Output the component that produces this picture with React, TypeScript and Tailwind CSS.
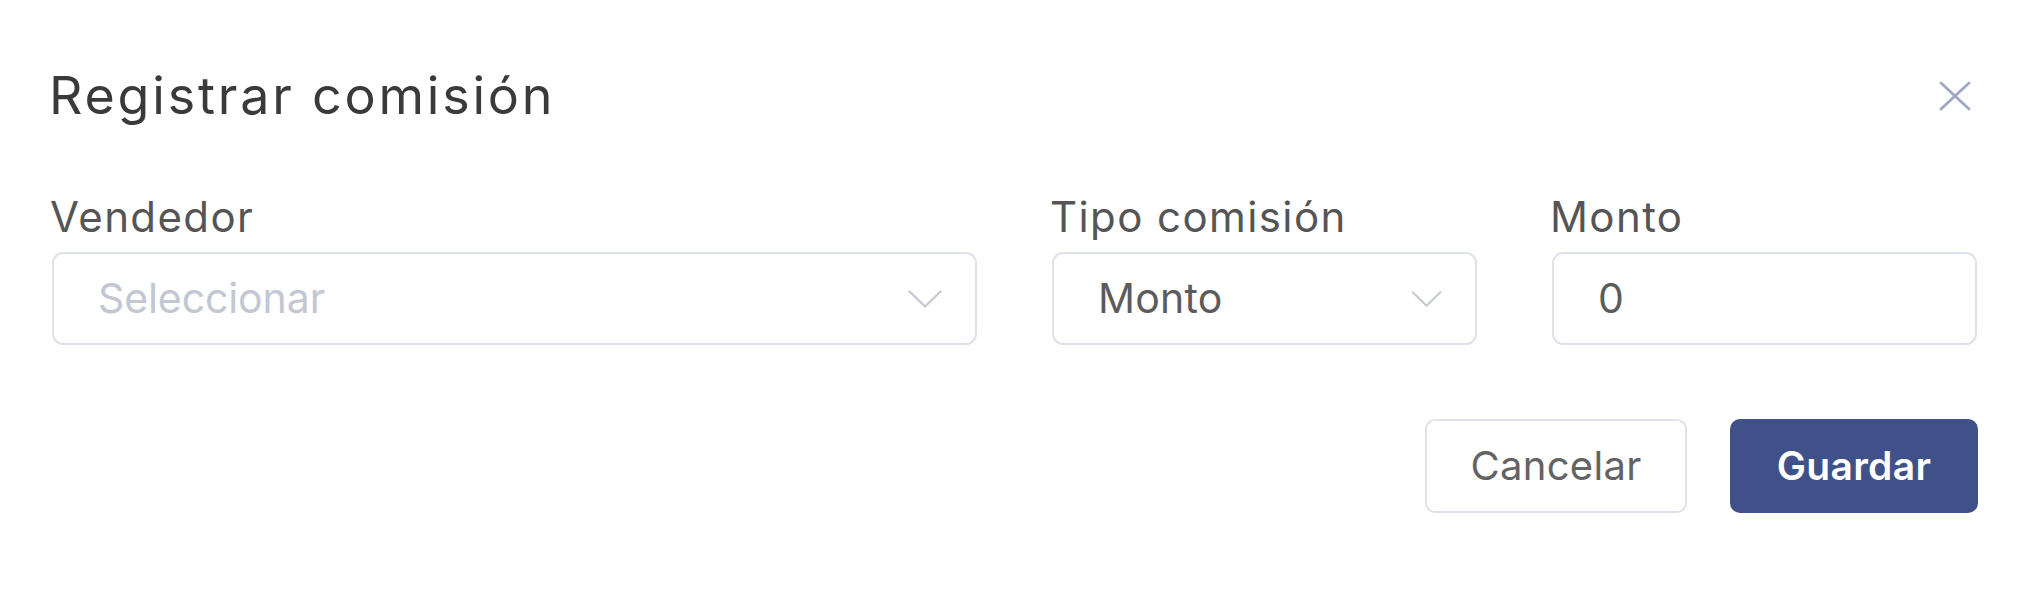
import React from 'react';

const Chevron = ({ className = '' }: { className?: string }) => (
  <svg viewBox="0 0 34 18" className={className} fill="none" stroke="currentColor" strokeWidth={2.4} strokeLinecap="round" strokeLinejoin="round">
    <polyline points="1.5,1.5 17,16.5 32.5,1.5" />
  </svg>
);

const Field = ({ label, children, className = '' }: { label: string; children: React.ReactNode; className?: string }) => (
  <div className={`flex flex-col ${className}`}>
    <label className="-ml-[2px] text-[42px] leading-[50px] tracking-[1.4px] text-[#555555] mb-[10px]">{label}</label>
    {children}
  </div>
);

export default function App() {
  return (
    <div className="w-[2034px] h-[592px] bg-white font-['Inter',sans-serif] pl-[52px] pr-[57px] pt-[64px]">
      {/* header */}
      <div className="flex items-center justify-between h-[64px]">
        <h2 className="-ml-[3px] text-[52px] leading-[64px] tracking-[2.8px] font-normal text-[#3a3a3a]">Registrar comisión</h2>
        <button className="w-[32px] h-[30px] mr-[6px] text-[#9ea8c2]" title="Cerrar">
          <svg viewBox="0 0 32 30" className="w-full h-full" fill="none" stroke="currentColor" strokeWidth={2.8} strokeLinecap="round">
            <line x1="2" y1="2" x2="30" y2="28" />
            <line x1="30" y1="2" x2="2" y2="28" />
          </svg>
        </button>
      </div>

      {/* fields */}
      <div className="grid grid-cols-4 gap-x-[75px] mt-[64px]">
        <Field label="Vendedor" className="col-span-2">
          <div className="h-[93px] border-2 border-[#dfe2ea] rounded-[11px] flex items-center justify-between pl-[44px] pr-[33px]">
            <span className="text-[41px] tracking-[-0.1px] text-[#c3c7d1]">Seleccionar</span>
            <Chevron className="w-[34px] h-[18px] text-[#c5c9d4]" />
          </div>
        </Field>
        <Field label="Tipo comisión">
          <div className="h-[93px] border-2 border-[#dfe2ea] rounded-[11px] flex items-center justify-between pl-[44px] pr-[33px]">
            <span className="text-[41px] tracking-[0.2px] text-[#5c5c5c]">Monto</span>
            <Chevron className="w-[31px] h-[16px] text-[#c5c9d4]" />
          </div>
        </Field>
        <Field label="Monto">
          <div className="h-[93px] border-2 border-[#dfe2ea] rounded-[11px] flex items-center pl-[44px]">
            <span className="text-[41px] text-[#5c5c5c]">0</span>
          </div>
        </Field>
      </div>

      {/* actions */}
      <div className="flex justify-end gap-[43px] mt-[74px] -mr-[1px]">
        <button className="w-[262px] h-[94px] border-2 border-[#dfe2ea] rounded-[10px] bg-white text-[40px] tracking-[0.3px] text-[#636363]">
          Cancelar
        </button>
        <button className="w-[248px] h-[94px] rounded-[10px] bg-[#3f5188] text-[39px] font-semibold tracking-[0.3px] text-white">
          Guardar
        </button>
      </div>
    </div>
  );
}
